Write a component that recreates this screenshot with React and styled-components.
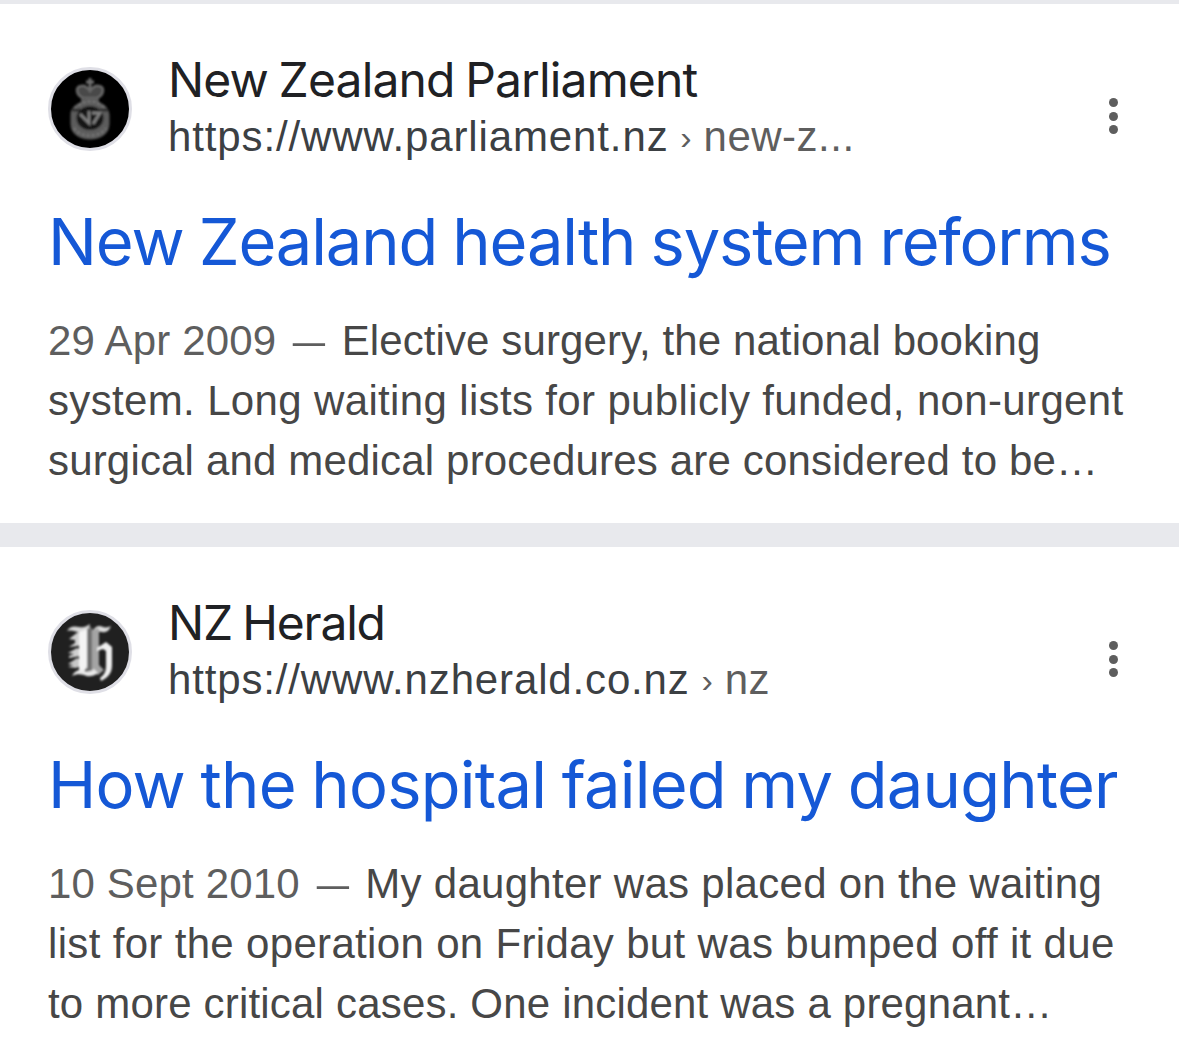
import React from "react";
import styled, { createGlobalStyle } from "styled-components";

const GlobalStyle = createGlobalStyle`
  body {
    margin: 0;
    background: #ffffff;
  }
`;

const Results = styled.main`
  display: flex;
  flex-direction: column;
  gap: 24px;
  width: 1179px;
  height: 1052px;
  border-top: 4px solid #e8e9ed;
  background: #e8e9ed;
  overflow: hidden;
`;

const Card = styled.article`
  flex: none;
  height: 519px;
  padding: 48px 48px 0;
  box-sizing: border-box;
  background: #ffffff;
  white-space: nowrap;
`;

const CardHeader = styled.header`
  display: flex;
  align-items: flex-start;
  height: 112px;
`;

const Favicon = styled.svg`
  flex: none;
  display: block;
  width: 84px;
  height: 84px;
  margin-top: 15px;
`;

const Source = styled.div`
  flex: 1;
  margin-left: 36px;
`;

const SiteName = styled.div`
  height: 57px;
  font-family: Inter, sans-serif;
  font-size: 48px;
  line-height: 56px;
  letter-spacing: ${(props) => props.$spacing}px;
  word-spacing: -2px;
  color: #202124;
`;

const Address = styled.div`
  display: flex;
  height: 56px;
  font-family: "Liberation Sans", Arial, sans-serif;
  font-size: 42px;
  line-height: 56px;
  color: #3c4043;
`;

const Domain = styled.span`
  letter-spacing: ${(props) => props.$spacing}px;
`;

const Separator = styled.span`
  width: 35px;
  font-size: 34px;
  text-align: center;
  color: #5e5e5e;
`;

const Crumb = styled.span`
  letter-spacing: 0.5px;
  color: #5e5e5e;
`;

const MenuButton = styled.button`
  display: flex;
  flex-direction: column;
  align-items: center;
  gap: 4.5px;
  width: 36px;
  margin: 46px 0 0;
  padding: 0;
  border: none;
  background: none;
`;

const Dot = styled.span`
  width: 9px;
  height: 9px;
  border-radius: 50%;
  background: #5e5e5e;
`;

const Title = styled.h3`
  height: 80px;
  margin: 38px 0 0;
  font-family: Inter, sans-serif;
  font-size: 65px;
  font-weight: 400;
  line-height: 80px;
  letter-spacing: ${(props) => props.$spacing}px;
  word-spacing: -2px;
  color: #1558d6;
`;

const Snippet = styled.div`
  margin-top: 29px;
  font-family: "Liberation Sans", Arial, sans-serif;
  font-size: 42px;
  line-height: 60px;
  color: #474747;
`;

const Line = styled.div`
  letter-spacing: ${(props) => props.$spacing}px;
`;

const DateText = styled.span`
  letter-spacing: 0.15px;
  color: #5e5e5e;
`;

const Dash = styled.span`
  display: inline-block;
  margin: 0 11.5px 0 12px;
  letter-spacing: 0;
  transform: scaleX(0.77);
  color: #5e5e5e;
`;

const ParliamentIcon = () => (
  <Favicon viewBox="0 0 84 84">
    <defs>
      <filter id="soft">
        <feGaussianBlur stdDeviation="1" />
      </filter>
    </defs>
    <circle cx="42" cy="42" r="40.5" fill="#000" stroke="#dfdfe6" strokeWidth="3" />
    <g filter="url(#soft)">
      {/* crown */}
      <path d="M42 11v16M38 15h8" stroke="#707070" strokeWidth="2.8" />
      <path
        d="M35 31c-7-3-8-11-2-12 4-1 7 2 9 5 2-3 5-6 9-5 6 1 5 9-2 12z"
        fill="#484848"
        stroke="#686868"
        strokeWidth="2.6"
      />
      {/* belt */}
      <path
        d="M33 31h18v4c7 3 10 7 10.500 13v9c0 10-9 15.500-19.500 15.500s-19.500-5.500-19.500-15.500v-9c0-6 3.500-10 10.500-13z"
        fill="#5c5c5c"
      />
      <path
        d="M27 42a18 17 0 0 1 30 0M26 61c6 10 26 10 32 0"
        fill="none"
        stroke="#747474"
        strokeWidth="2.500"
        strokeDasharray="3 2"
      />
      <ellipse cx="42" cy="51" rx="13.500" ry="12" fill="#151515" />
      <path d="M24 43h8M52 43h8" stroke="#2c2c2c" strokeWidth="3" />
      <path d="M32 47l9 9V44M44 46h8l-7 11" fill="none" stroke="#808080" strokeWidth="2.800" />
    </g>
  </Favicon>
);

const HeraldIcon = () => (
  <Favicon viewBox="0 0 84 84">
    <defs>
      <filter id="softer">
        <feGaussianBlur stdDeviation="0.9" />
      </filter>
    </defs>
    <circle cx="42" cy="42" r="40.5" fill="#202020" stroke="#dfdfe6" strokeWidth="3" />
    <g filter="url(#softer)">
      <path d="M19 21c3-5 7-5 12-4 5 1 8-1 11-3l-1 7c-3 3-7 2-11 1-4-1-8-2-11-1z" fill="#d8d8d8" />
      <path d="M44 22c3-6 7-7 11-5 3 1 6 0 8-1-2 5-5 7-9 6-4-1-7 0-10 3z" fill="#ddd" />
      <path d="M21 29l9-7 3 2v9l-3 3-9 1 6-4v-3z" fill="#d0d0d0" />
      <path d="M20 43l9-5 4 2v6l-12 2v-2l5-2z" fill="#d0d0d0" />
      <path d="M20 54l9-6 4 2v6l-5 2-8-1 5-2z" fill="#c8c8c8" />
      <path d="M31 22l8-3v37c0 4-3 6-8 6z" fill="#f4f4f4" />
      <path d="M39 19l5-2v43l-5 3z" fill="#707070" />
      <path d="M44 20l7-2v37l5 5-6 5-6-5z" fill="#a4a4a4" />
      <path d="M24 66c3-6 8-7 13-5 4 1 6 0 9-2l4 4c-5 4-10 4-14 2-4-1-8-1-12 1z" fill="#e8e8e8" />
      <path d="M49 38l9-6 6 5v18c0 9-5 13-11 16l-1-3c5-4 6-7 6-13V41l-3-2-6 2z" fill="#f0f0f0" />
    </g>
  </Favicon>
);

const results = [
  {
    icon: ParliamentIcon,
    name: "New Zealand Parliament",
    nameSpacing: -0.86,
    domain: "https://www.parliament.nz",
    domainSpacing: 0.88,
    crumb: "new-z...",
    title: "New Zealand health system reforms",
    titleSpacing: -1.13,
    date: "29 Apr 2009",
    lines: [
      { text: "Elective surgery, the national booking", spacing: 0.1 },
      { text: "system. Long waiting lists for publicly funded, non-urgent", spacing: 0.35 },
      { text: "surgical and medical procedures are considered to be…", spacing: 0.17 },
    ],
  },
  {
    icon: HeraldIcon,
    name: "NZ Herald",
    nameSpacing: -1.2,
    domain: "https://www.nzherald.co.nz",
    domainSpacing: 0.85,
    crumb: "nz",
    title: "How the hospital failed my daughter",
    titleSpacing: -0.77,
    date: "10 Sept 2010",
    lines: [
      { text: "My daughter was placed on the waiting", spacing: 0.29 },
      { text: "list for the operation on Friday but was bumped off it due", spacing: 0.33 },
      { text: "to more critical cases. One incident was a pregnant…", spacing: 0.19 },
    ],
  },
];

const App = () => {
  return (
    <>
      <GlobalStyle />
      <Results>
        {results.map((result) => (
          <Card key={result.name}>
            <CardHeader>
              <result.icon />
              <Source>
                <SiteName $spacing={result.nameSpacing}>{result.name}</SiteName>
                <Address>
                  <Domain $spacing={result.domainSpacing}>{result.domain}</Domain>
                  <Separator>›</Separator>
                  <Crumb>{result.crumb}</Crumb>
                </Address>
              </Source>
              <MenuButton aria-label="More options">
                <Dot />
                <Dot />
                <Dot />
              </MenuButton>
            </CardHeader>
            <Title $spacing={result.titleSpacing}>{result.title}</Title>
            <Snippet>
              {result.lines.map((line, index) => (
                <Line key={line.text} $spacing={line.spacing}>
                  {index === 0 && (
                    <>
                      <DateText>{result.date}</DateText>
                      <Dash>—</Dash>
                    </>
                  )}
                  {line.text}
                </Line>
              ))}
            </Snippet>
          </Card>
        ))}
      </Results>
    </>
  );
};

export default App;
